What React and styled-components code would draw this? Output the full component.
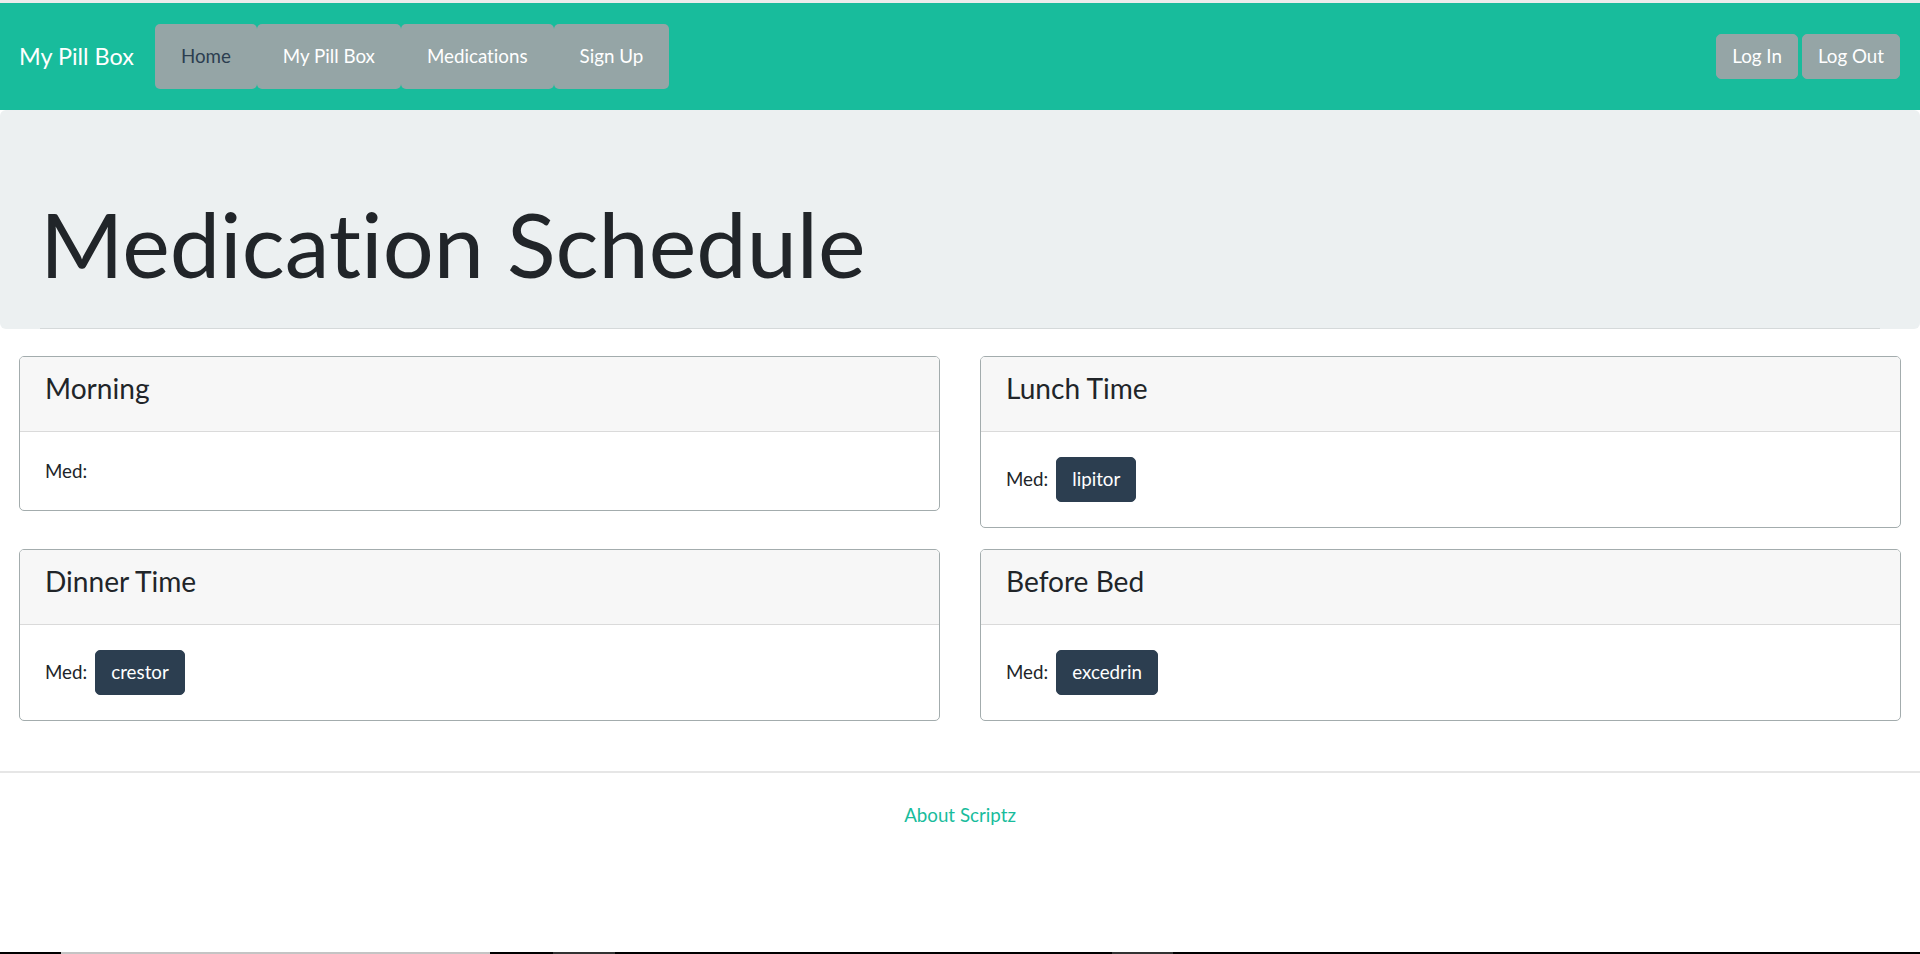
import styled, { createGlobalStyle } from 'styled-components';

const GlobalStyle = createGlobalStyle`
  html, body {
    margin: 0;
    padding: 0;
    background: #ffffff;
  }
  body {
    font-family: Lato, "Open Sans", "Liberation Sans", sans-serif;
    font-size: 18.75px;
    line-height: 1.5;
    color: #212529;
    font-variant-ligatures: none;
  }
  * {
    box-sizing: border-box;
  }
`;

const Page = styled.div`
  min-height: 100vh;
  display: flex;
  flex-direction: column;
`;

const TopStrip = styled.div`
  height: 3px;
  background: #ececec;
`;

const Navbar = styled.nav`
  height: 107px;
  background: #18bc9c;
  display: flex;
  align-items: center;
  padding: 0 20px 0 19px;
`;

const Brand = styled.a`
  font-size: 23.4px;
  line-height: 1.5;
  color: #ffffff;
  margin-right: 21px;
  white-space: nowrap;
`;

const NavGroup = styled.div`
  display: flex;
  align-items: center;
`;

const NavButton = styled.a`
  height: 65px;
  display: flex;
  align-items: center;
  padding: 0 26px;
  background: #95a5a6;
  border-radius: 5px;
  color: ${({ $active }) => ($active ? '#2c3e50' : '#ffffff')};
  white-space: nowrap;
  cursor: pointer;
`;

const AuthGroup = styled.div`
  margin-left: auto;
  display: flex;
  align-items: center;
  gap: 4px;
`;

const AuthButton = styled.button`
  font: inherit;
  line-height: 1.5;
  color: #ffffff;
  background: #95a5a6;
  border: 1px solid #95a5a6;
  border-radius: 5px;
  padding: 7.5px 15px;
  cursor: pointer;
`;

const Jumbotron = styled.section`
  background: #ecf0f1;
  border-radius: 6px;
  padding: 79px 40px 0;
`;

const Display = styled.h1`
  margin: 0 0 10px;
  font-size: 90px;
  font-weight: 400;
  line-height: 1.2;
  color: #212529;
`;

const Rule = styled.hr`
  margin: 31px 0 0;
  border: 0;
  border-top: 1px solid #d5d9da;
`;

const CardGrid = styled.div`
  display: grid;
  grid-template-columns: 1fr 1fr;
  column-gap: 40px;
  row-gap: 21px;
  align-items: start;
  padding: 0 19px;
  margin-top: 27px;
`;

const Card = styled.div`
  border: 1px solid #a3acad;
  border-radius: 5px;
  background: #ffffff;
  overflow: hidden;
`;

const CardHeader = styled.div`
  background: #f7f7f7;
  padding: 15px 25px;
  border-bottom: 1px solid #dadada;
`;

const CardTitle = styled.h4`
  margin: 0 0 10px;
  font-size: 28.1px;
  font-weight: 400;
  line-height: 1.2;
`;

const CardBody = styled.div`
  padding: 25px;
  display: flex;
  align-items: center;
  gap: 8px;
`;

const MedLabel = styled.span`
  color: #212529;
`;

const MedBadge = styled.span`
  display: inline-block;
  background: #2c3e50;
  border: 1px solid #2c3e50;
  border-radius: 5px;
  color: #ffffff;
  padding: 7.5px 15px;
  line-height: 1.5;
`;

const FooterRule = styled.hr`
  margin: 50px 0 0;
  border: 0;
  border-top: 2px solid #e6e6e6;
`;

const Footer = styled.footer`
  padding-top: 28px;
  text-align: center;
`;

const FooterLink = styled.a`
  color: #18bc9c;
  text-decoration: none;
`;

const Spacer = styled.div`
  flex: 1;
`;

const Taskbar = styled.div`
  height: 2px;
  background: #000000;
  display: flex;
`;

const TaskSegment = styled.div`
  width: ${({ $w }) => $w}px;
  margin-left: ${({ $left }) => $left}px;
  background: ${({ $color }) => $color};
`;

const schedule = [
  { title: 'Morning', meds: [] },
  { title: 'Lunch Time', meds: ['lipitor'] },
  { title: 'Dinner Time', meds: ['crestor'] },
  { title: 'Before Bed', meds: ['excedrin'] },
];

const navItems = ['Home', 'My Pill Box', 'Medications', 'Sign Up'];

const App = () => {
  return (
    <Page>
      <GlobalStyle />
      <TopStrip />
      <Navbar>
        <Brand>My Pill Box</Brand>
        <NavGroup>
          {navItems.map((item, index) => (
            <NavButton key={item} $active={index === 0}>
              {item}
            </NavButton>
          ))}
        </NavGroup>
        <AuthGroup>
          <AuthButton>Log In</AuthButton>
          <AuthButton>Log Out</AuthButton>
        </AuthGroup>
      </Navbar>

      <Jumbotron>
        <Display>Medication Schedule</Display>
        <Rule />
      </Jumbotron>

      <CardGrid>
        {schedule.map((slot) => (
          <Card key={slot.title}>
            <CardHeader>
              <CardTitle>{slot.title}</CardTitle>
            </CardHeader>
            <CardBody>
              <MedLabel>Med:</MedLabel>
              {slot.meds.map((med) => (
                <MedBadge key={med}>{med}</MedBadge>
              ))}
            </CardBody>
          </Card>
        ))}
      </CardGrid>

      <FooterRule />
      <Footer>
        <FooterLink>About Scriptz</FooterLink>
      </Footer>

      <Spacer />
      <Taskbar>
        <TaskSegment $left={61} $w={429} $color="#c4c4c4" />
        <TaskSegment $left={63} $w={62} $color="#333333" />
        <TaskSegment $left={497} $w={61} $color="#333333" />
      </Taskbar>
    </Page>
  );
};

export default App;
